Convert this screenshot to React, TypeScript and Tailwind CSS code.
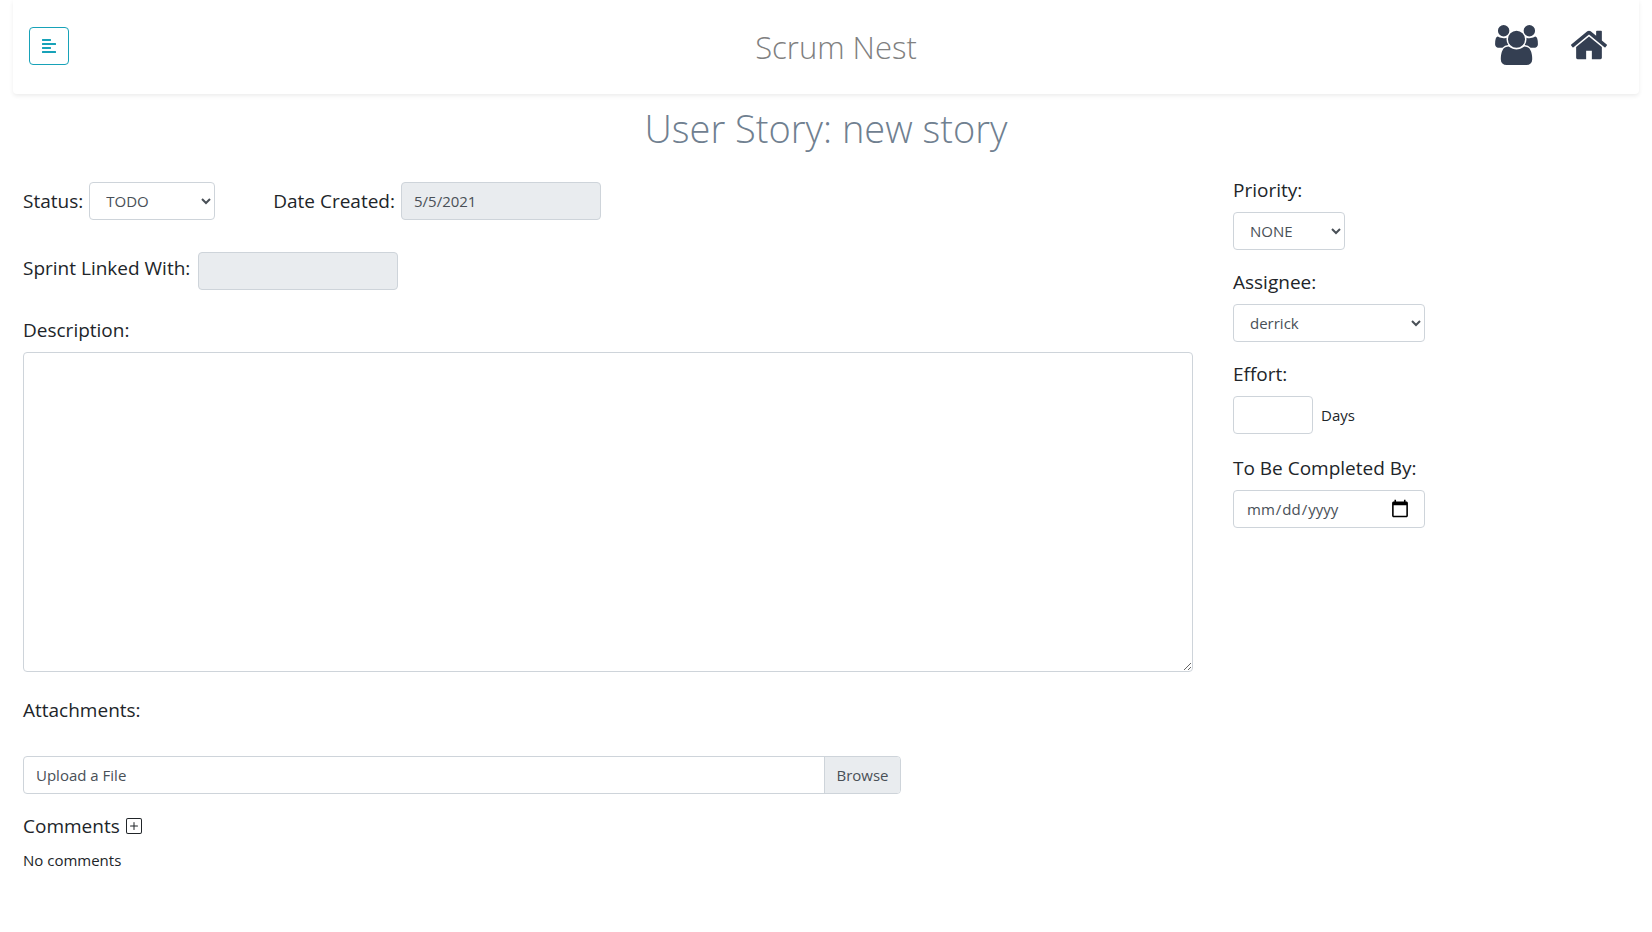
import React from "react";
import { FaAlignLeft } from "react-icons/fa";
import { BsPlusSquare } from "react-icons/bs";

const labelStyle = "text-[19px] leading-6 text-[#212529]";
const controlStyle =
  "h-[38px] rounded border border-[#ced4da] text-[15px] leading-6 text-[#495057]";

function UsersIcon() {
  return (
    <svg viewBox="0 0 1920 1792" className="h-10 w-[43px] fill-current" aria-hidden="true">
      <path d="M593 896q-162 5-265 128h-134q-82 0-138-40.5t-56-118.5q0-353 124-353 6 0 43.5 21t97.5 42.5 119 21.5q67 0 133-23-5 37-5 66 0 139 81 256zm1071 637q0 120-73 189.5t-194 69.5h-874q-121 0-194-69.5t-73-189.5q0-53 3.5-103.5t14-109 26.5-108.5 43-97.5 62-81 85.5-53.5 111.5-20q10 0 43 21.5t73 48 107 48 135 21.5 135-21.5 107-48 73-48 43-21.5q61 0 111.5 20t85.5 53.5 62 81 43 97.5 26.5 108.5 14 109 3.5 103.5zm-1024-1277q0 106-75 181t-181 75-181-75-75-181 75-181 181-75 181 75 75 181zm704 384q0 159-112.5 271.5t-271.5 112.5-271.5-112.5-112.5-271.5 112.5-271.5 271.5-112.5 271.5 112.5 112.5 271.5zm576 225q0 78-56 118.5t-138 40.5h-134q-103-123-265-128 81-117 81-256 0-29-5-66 66 23 133 23 59 0 119-21.5t97.5-42.5 43.5-21q124 0 124 353zm-128-609q0 106-75 181t-181 75-181-75-75-181 75-181 181-75 181 75 75 181z" />
    </svg>
  );
}

function HomeIcon() {
  return (
    <svg viewBox="0 0 1792 1792" className="size-10 fill-current" aria-hidden="true">
      <path d="M1472 992v480q0 26-19 45t-45 19h-384v-384h-256v384h-384q-26 0-45-19t-19-45v-480q0-1 .5-3t.5-3l575-474 575 474q1 2 1 6zm223-69l-62 74q-8 9-21 11h-3q-13 0-21-7l-692-577-692 577q-12 8-24 7-13-2-21-11l-62-74q-8-10-7-23.5t11-21.5l719-599q32-26 76-26t76 26l244 204v-195q0-14 9-23t23-9h192q14 0 23 9t9 23v408l219 182q10 8 11 21.5t-7 23.5z" />
    </svg>
  );
}

function Header() {
  return (
    <header className="mx-[13px] flex h-[94px] items-center justify-between rounded-b bg-white pr-[30px] pl-4 shadow-[0_2px_4px_rgba(0,0,0,0.075)]">
      <div className="flex flex-1">
        <button
          type="button"
          aria-label="Toggle menu"
          className="mb-0.5 flex h-[38px] w-10 items-center justify-center rounded border border-[#17a2b8] text-[#17a2b8]"
        >
          <FaAlignLeft size={16} />
        </button>
      </div>
      <div className="pl-[34px] text-[31px] leading-10 font-light text-[#808080]">Scrum Nest</div>
      <nav className="flex flex-1 items-center justify-end gap-[31px] pb-1 text-[#343f52]">
        <a href="#teams" aria-label="Teams">
          <UsersIcon />
        </a>
        <a href="#home" aria-label="Home">
          <HomeIcon />
        </a>
      </nav>
    </header>
  );
}

function StoryDetails() {
  return (
    <div>
      <div className="flex items-center">
        <label htmlFor="status" className={`${labelStyle} mr-1.5`}>
          Status:
        </label>
        <select id="status" className={`${controlStyle} w-[126px] bg-white px-3`}>
          <option>TODO</option>
        </select>
        <label htmlFor="created" className={`${labelStyle} mr-1.5 ml-[58px]`}>
          Date Created:
        </label>
        <input
          id="created"
          readOnly
          value="5/5/2021"
          className={`${controlStyle} w-[200px] bg-[#e9ecef] px-3`}
        />
      </div>
      <div className="mt-8 flex items-start">
        <label htmlFor="sprint" className={`${labelStyle} mt-1 mr-2`}>
          Sprint Linked With:
        </label>
        <input
          id="sprint"
          readOnly
          value=""
          className={`${controlStyle} w-[200px] bg-[#e9ecef] px-3`}
        />
      </div>
      <label htmlFor="description" className={`${labelStyle} mt-7 mb-[10px] block`}>
        Description:
      </label>
      <textarea
        id="description"
        className="block h-80 w-full resize rounded border border-[#ced4da] px-3 py-1.5 text-[15px] text-[#495057]"
      />
      <h2 className={`${labelStyle} mt-[26px]`}>Attachments:</h2>
      <input id="upload" type="file" className="sr-only" />
      <label
        htmlFor="upload"
        className={`${controlStyle} mt-[34px] flex w-3/4 overflow-hidden bg-white`}
      >
        <span className="flex-1 px-3 py-1.5">Upload a File</span>
        <span className="border-l border-[#ced4da] bg-[#e9ecef] px-[11px] py-1.5">Browse</span>
      </label>
      <div className="mt-5 flex items-center gap-1.5">
        <h2 className={labelStyle}>Comments</h2>
        <button type="button" aria-label="Add comment" className="text-[#212529]">
          <BsPlusSquare size={16} />
        </button>
      </div>
      <p className="mt-[10px] text-[15px] leading-6 text-[#212529]">No comments</p>
    </div>
  );
}

function StorySidebar() {
  return (
    <div className="flex flex-col items-start">
      <label htmlFor="priority" className={`${labelStyle} mb-[10px]`}>
        Priority:
      </label>
      <select id="priority" className={`${controlStyle} mb-5 w-28 bg-white px-3`}>
        <option>NONE</option>
      </select>
      <label htmlFor="assignee" className={`${labelStyle} mb-[10px]`}>
        Assignee:
      </label>
      <select id="assignee" className={`${controlStyle} mb-5 w-48 bg-white px-3`}>
        <option>derrick</option>
      </select>
      <label htmlFor="effort" className={`${labelStyle} mb-[10px]`}>
        Effort:
      </label>
      <div className="mb-[22px] flex items-center gap-2">
        <input id="effort" className={`${controlStyle} w-20 bg-white px-3`} />
        <span className="text-[15px] leading-6 text-[#212529]">Days</span>
      </div>
      <label htmlFor="due" className={`${labelStyle} mb-[10px]`}>
        To Be Completed By:
      </label>
      <input
        id="due"
        type="date"
        className={`${controlStyle} w-48 bg-white px-3 [&::-webkit-calendar-picker-indicator]:size-5`}
      />
    </div>
  );
}

export default function App() {
  return (
    <div className="min-h-screen bg-white font-['Open_Sans',sans-serif]">
      <Header />
      <main>
        <h1 className="mt-[10px] text-center text-[38px] leading-12 font-light text-[#708090]">
          User Story: new story
        </h1>
        <div className="mt-[26px] grid grid-cols-[3fr_1fr] gap-10 pr-[29px] pl-[23px]">
          <div className="pt-1">
            <StoryDetails />
          </div>
          <StorySidebar />
        </div>
      </main>
    </div>
  );
}
